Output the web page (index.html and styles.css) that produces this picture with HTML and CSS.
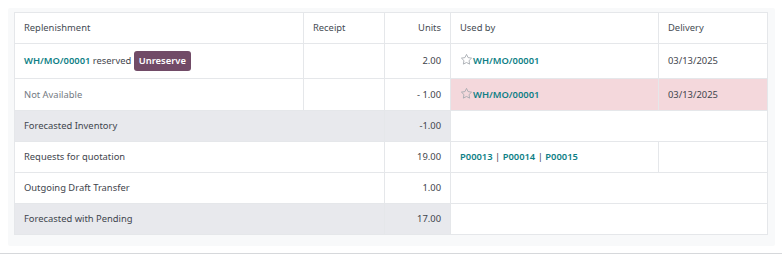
FILE: index.html
```html
<!DOCTYPE html>
<html lang="en">
<head>
<meta charset="utf-8">
<title>Forecast</title>
<link rel="stylesheet" href="styles.css">
</head>
<body>
<div class="page">
  <div class="panel">
    <table class="report">
      <colgroup>
        <col class="c-rep"><col class="c-rec"><col class="c-units"><col class="c-used"><col class="c-del">
      </colgroup>
      <thead>
        <tr class="row-head">
          <th>Replenishment</th>
          <th>Receipt</th>
          <th class="num">Units</th>
          <th>Used by</th>
          <th>Delivery</th>
        </tr>
      </thead>
      <tbody>
        <tr class="row-btn">
          <td><a class="link">WH/MO/00001</a> reserved <button class="btn-unreserve">Unreserve</button></td>
          <td></td>
          <td class="num">2.00</td>
          <td><span class="star"><svg viewBox="0 0 24 24" width="13" height="13"><path d="M12 2.6l2.9 5.9 6.5.95-4.7 4.6 1.1 6.5L12 17.5l-5.8 3.05 1.1-6.5-4.7-4.6 6.5-.95z" fill="none" stroke="currentColor" stroke-width="1.6" stroke-linejoin="round"/></svg></span><a class="link">WH/MO/00001</a></td>
          <td>03/13/2025</td>
        </tr>
        <tr class="row-na">
          <td class="muted">Not Available</td>
          <td></td>
          <td class="num">- 1.00</td>
          <td class="danger"><span class="star"><svg viewBox="0 0 24 24" width="13" height="13"><path d="M12 2.6l2.9 5.9 6.5.95-4.7 4.6 1.1 6.5L12 17.5l-5.8 3.05 1.1-6.5-4.7-4.6 6.5-.95z" fill="none" stroke="currentColor" stroke-width="1.6" stroke-linejoin="round"/></svg></span><a class="link">WH/MO/00001</a></td>
          <td class="danger">03/13/2025</td>
        </tr>
        <tr class="row-total">
          <td colspan="2" class="shade">Forecasted Inventory</td>
          <td class="num shade">-1.00</td>
          <td colspan="2"></td>
        </tr>
        <tr>
          <td colspan="2">Requests for quotation</td>
          <td class="num">19.00</td>
          <td><a class="link">P00013</a> | <a class="link">P00014</a> | <a class="link">P00015</a></td>
          <td></td>
        </tr>
        <tr>
          <td colspan="2">Outgoing Draft Transfer</td>
          <td class="num">1.00</td>
          <td colspan="2"></td>
        </tr>
        <tr class="row-total">
          <td colspan="2" class="shade">Forecasted with Pending</td>
          <td class="num shade">17.00</td>
          <td colspan="2"></td>
        </tr>
      </tbody>
    </table>
  </div>
  <div class="bottom-line"></div>
</div>
</body>
</html>
```
FILE: styles.css
```css
html, body {
  margin: 0;
  padding: 0;
  background: #ffffff;
}
.page {
  padding: 8px 0 0 0;
  font-family: "Noto Sans", "Open Sans", sans-serif;
  font-size: 9.4px;
  color: #3f454d;
}
.panel {
  margin: 0 7px 0 8px;
  padding: 4px 8px 11px 6px;
  background: #f8f9fa;
  border-radius: 2px;
}
.report {
  width: 753px;
  border-collapse: collapse;
  table-layout: fixed;
  background: #ffffff;
}
.c-rep { width: 289px; }
.c-rec { width: 81px; }
.c-units { width: 66px; }
.c-used { width: 208px; }
.c-del { width: 109px; }
.report th,
.report td {
  border: 1px solid #e5e7ea;
  padding: 7px 9px;
  line-height: 16px;
  height: 16px;
  text-align: left;
  font-weight: 400;
  white-space: nowrap;
  vertical-align: middle;
}
.report th { color: #454b53; }
.report .num { text-align: right; }
.row-btn td { padding-top: 7px; padding-bottom: 7px; height: 20px; }
.row-na td { height: 17px; }
.muted { color: #737a82; }
.shade { background: #e8e9ed; }
.danger { background: #f4d8dc; }
.link {
  color: #0e7f86;
  font-weight: 600;
  text-decoration: none;
}
.btn-unreserve {
  display: inline-block;
  margin-left: 0;
  height: 20px;
  padding: 0 5px;
  border: 0;
  border-radius: 3px;
  background: #714b67;
  color: #ffffff;
  font-family: inherit;
  font-size: 9.4px;
  font-weight: 600;
  line-height: 20px;
  vertical-align: middle;
}
.star {
  display: inline-block;
  color: #a3a8ae;
  vertical-align: -2px;
  margin-right: 0;
}
.star svg { display: block; }
.bottom-line {
  margin-top: 7px;
  border-top: 1px solid #d6d8db;
  height: 1px;
}
```
